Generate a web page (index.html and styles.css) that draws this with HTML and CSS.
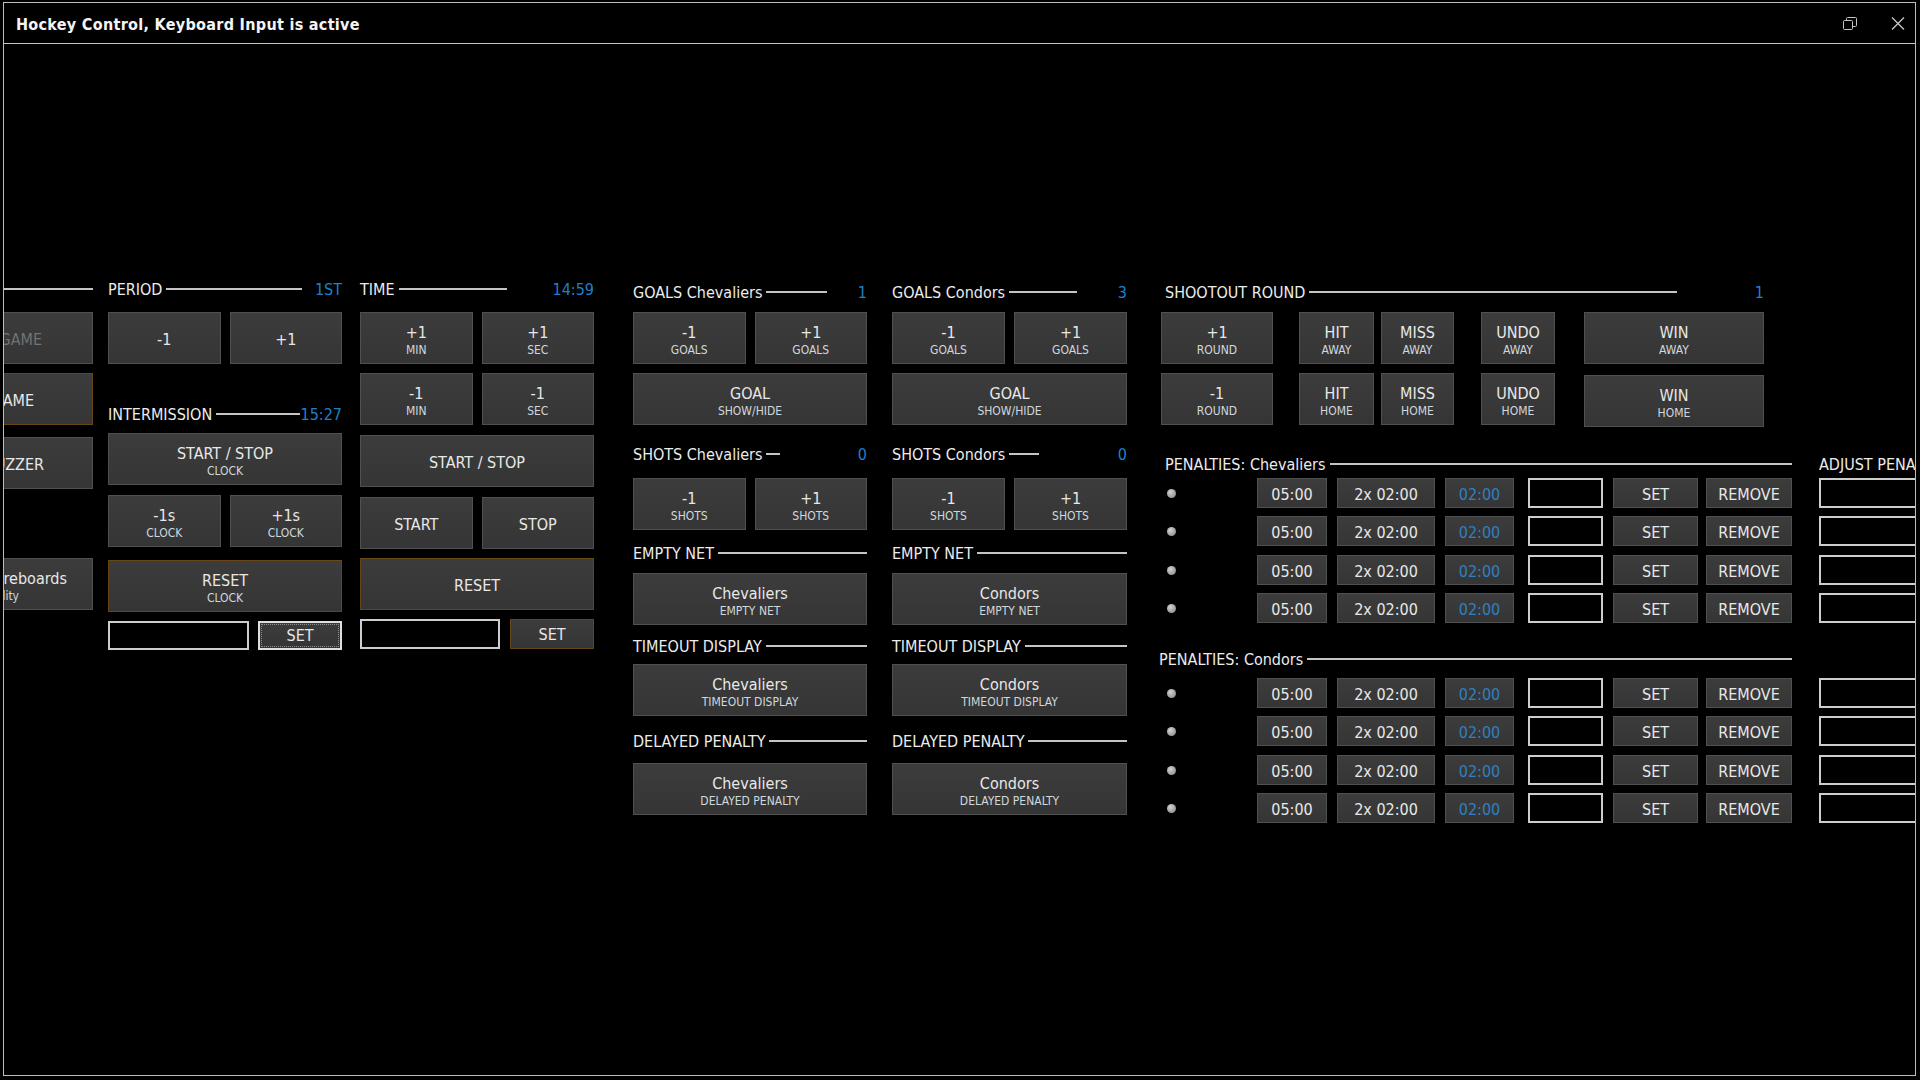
FILE: index.html
```html
<!DOCTYPE html>
<html lang="en">
<head>
<meta charset="utf-8">
<title>Hockey Control</title>
<link rel="stylesheet" href="styles.css">
</head>
<body>
<div class="window">
  <div class="titlebar">
    <span class="title">Hockey Control, Keyboard Input is active</span>
    <div class="wctrls">
      <svg class="wicon" width="14" height="13" viewBox="0 0 14 13"><rect x="0.5" y="3.5" width="9" height="9" rx="1" fill="none" stroke="#c4c4c4"/><path d="M3.5 3.5V1.5a1 1 0 0 1 1-1H12.5a1 1 0 0 1 1 1V8.5a1 1 0 0 1-1 1H9.5" fill="none" stroke="#c4c4c4"/></svg>
      <svg class="wicon" width="14" height="13" viewBox="0 0 14 13"><path d="M1 0.5L13 12.5M13 0.5L1 12.5" fill="none" stroke="#c4c4c4" stroke-width="1.4"/></svg>
    </div>
  </div>
  <div class="content">
    <div class="board">

      <div class="col col-a">
        <div class="hdr"><span class="hdr-line solo"></span></div>
        <div class="btn btn-a a1 dis mt13"><span class="main">START GAME</span></div>
        <div class="btn btn-a a2 warn mt9"><span class="main">END GAME</span></div>
        <div class="btn btn-a a3 mt12"><span class="main">BUZZER</span></div>
        <div class="btn btn-a a4 mt69"><span class="main">Show Scoreboards</span><span class="sub">Visibility</span></div>
      </div>

      <div class="col col-b">
        <div class="hdr"><span class="hdr-lbl">PERIOD</span><span class="hdr-line"></span><span class="hdr-val v40">1ST</span></div>
        <div class="pair mt13">
          <div class="btn"><span class="main">-1</span></div>
          <div class="btn"><span class="main">+1</span></div>
        </div>
        <div class="hdr mt40"><span class="hdr-lbl">INTERMISSION</span><span class="hdr-line"></span><span class="hdr-val v42">15:27</span></div>
        <div class="btn mt9"><span class="main">START / STOP</span><span class="sub">CLOCK</span></div>
        <div class="pair mt10">
          <div class="btn"><span class="main">-1s</span><span class="sub">CLOCK</span></div>
          <div class="btn"><span class="main">+1s</span><span class="sub">CLOCK</span></div>
        </div>
        <div class="btn warn mt13"><span class="main">RESET</span><span class="sub">CLOCK</span></div>
        <div class="setrow h29 mt9">
          <div class="tin w141"></div>
          <div class="btn sbtn focus w84"><span class="main">SET</span></div>
        </div>
      </div>

      <div class="col col-c">
        <div class="hdr"><span class="hdr-lbl">TIME</span><span class="hdr-line"></span><span class="hdr-val v87">14:59</span></div>
        <div class="pair mt13">
          <div class="btn"><span class="main">+1</span><span class="sub">MIN</span></div>
          <div class="btn"><span class="main">+1</span><span class="sub">SEC</span></div>
        </div>
        <div class="pair mt9">
          <div class="btn"><span class="main">-1</span><span class="sub">MIN</span></div>
          <div class="btn"><span class="main">-1</span><span class="sub">SEC</span></div>
        </div>
        <div class="btn mt10"><span class="main">START / STOP</span></div>
        <div class="pair mt10">
          <div class="btn"><span class="main">START</span></div>
          <div class="btn"><span class="main">STOP</span></div>
        </div>
        <div class="btn warn mt9"><span class="main">RESET</span></div>
        <div class="setrow h30 mt9">
          <div class="tin w140"></div>
          <div class="btn sbtn warn w84"><span class="main">SET</span></div>
        </div>
      </div>

      <div class="col col-d">
        <div class="hdr mt3"><span class="hdr-lbl">GOALS Chevaliers</span><span class="hdr-line"></span><span class="hdr-val v40">1</span></div>
        <div class="pair mt10">
          <div class="btn"><span class="main">-1</span><span class="sub">GOALS</span></div>
          <div class="btn"><span class="main">+1</span><span class="sub">GOALS</span></div>
        </div>
        <div class="btn mt9"><span class="main">GOAL</span><span class="sub">SHOW/HIDE</span></div>
        <div class="hdr mt19"><span class="hdr-lbl">SHOTS Chevaliers</span><span class="hdr-line"></span><span class="hdr-val v87">0</span></div>
        <div class="pair mt14">
          <div class="btn"><span class="main">-1</span><span class="sub">SHOTS</span></div>
          <div class="btn"><span class="main">+1</span><span class="sub">SHOTS</span></div>
        </div>
        <div class="hdr mt13"><span class="hdr-lbl">EMPTY NET</span><span class="hdr-line"></span></div>
        <div class="btn mt10"><span class="main">Chevaliers</span><span class="sub">EMPTY NET</span></div>
        <div class="hdr mt11"><span class="hdr-lbl">TIMEOUT DISPLAY</span><span class="hdr-line"></span></div>
        <div class="btn mt8"><span class="main">Chevaliers</span><span class="sub">TIMEOUT DISPLAY</span></div>
        <div class="hdr mt15"><span class="hdr-lbl">DELAYED PENALTY</span><span class="hdr-line"></span></div>
        <div class="btn mt12"><span class="main">Chevaliers</span><span class="sub">DELAYED PENALTY</span></div>
      </div>

      <div class="col col-e">
        <div class="hdr mt3"><span class="hdr-lbl">GOALS Condors</span><span class="hdr-line"></span><span class="hdr-val v50">3</span></div>
        <div class="pair mt10">
          <div class="btn"><span class="main">-1</span><span class="sub">GOALS</span></div>
          <div class="btn"><span class="main">+1</span><span class="sub">GOALS</span></div>
        </div>
        <div class="btn mt9"><span class="main">GOAL</span><span class="sub">SHOW/HIDE</span></div>
        <div class="hdr mt19"><span class="hdr-lbl">SHOTS Condors</span><span class="hdr-line"></span><span class="hdr-val v88">0</span></div>
        <div class="pair mt14">
          <div class="btn"><span class="main">-1</span><span class="sub">SHOTS</span></div>
          <div class="btn"><span class="main">+1</span><span class="sub">SHOTS</span></div>
        </div>
        <div class="hdr mt13"><span class="hdr-lbl">EMPTY NET</span><span class="hdr-line"></span></div>
        <div class="btn mt10"><span class="main">Condors</span><span class="sub">EMPTY NET</span></div>
        <div class="hdr mt11"><span class="hdr-lbl">TIMEOUT DISPLAY</span><span class="hdr-line"></span></div>
        <div class="btn mt8"><span class="main">Condors</span><span class="sub">TIMEOUT DISPLAY</span></div>
        <div class="hdr mt15"><span class="hdr-lbl">DELAYED PENALTY</span><span class="hdr-line"></span></div>
        <div class="btn mt12"><span class="main">Condors</span><span class="sub">DELAYED PENALTY</span></div>
      </div>

      <div class="col col-f">
        <div class="shoot">
          <div class="hdr mt3 ind6"><span class="hdr-lbl">SHOOTOUT ROUND</span><span class="hdr-line"></span><span class="hdr-val v87">1</span></div>
          <div class="srow mt10">
            <div class="btn s-round"><span class="main">+1</span><span class="sub">ROUND</span></div>
            <div class="btn s-hit"><span class="main">HIT</span><span class="sub">AWAY</span></div>
            <div class="btn s-miss"><span class="main">MISS</span><span class="sub">AWAY</span></div>
            <div class="btn s-undo"><span class="main">UNDO</span><span class="sub">AWAY</span></div>
            <div class="btn s-win"><span class="main">WIN</span><span class="sub">AWAY</span></div>
          </div>
          <div class="srow mt9">
            <div class="btn s-round"><span class="main">-1</span><span class="sub">ROUND</span></div>
            <div class="btn s-hit"><span class="main">HIT</span><span class="sub">HOME</span></div>
            <div class="btn s-miss"><span class="main">MISS</span><span class="sub">HOME</span></div>
            <div class="btn s-undo"><span class="main">UNDO</span><span class="sub">HOME</span></div>
            <div class="btn s-win mt2"><span class="main">WIN</span><span class="sub">HOME</span></div>
          </div>
        </div>

        <div class="penhead mt27">
          <div class="hdr pen-hdr ind6"><span class="hdr-lbl">PENALTIES: Chevaliers</span><span class="hdr-line"></span></div>
          <div class="hdr adj-hdr"><span class="hdr-lbl">ADJUST PENALTY</span></div>
        </div>
        <div class="prow mt4">
          <span class="dot"></span><div class="pbtn p05">05:00</div><div class="pbtn p2x">2x 02:00</div><div class="pbtn p02">02:00</div><div class="tin pin"></div><div class="pbtn pset">SET</div><div class="pbtn prem">REMOVE</div><div class="tin padj"></div>
        </div>
        <div class="prow mt8">
          <span class="dot"></span><div class="pbtn p05">05:00</div><div class="pbtn p2x">2x 02:00</div><div class="pbtn p02">02:00</div><div class="tin pin"></div><div class="pbtn pset">SET</div><div class="pbtn prem">REMOVE</div><div class="tin padj"></div>
        </div>
        <div class="prow mt9">
          <span class="dot"></span><div class="pbtn p05">05:00</div><div class="pbtn p2x">2x 02:00</div><div class="pbtn p02">02:00</div><div class="tin pin"></div><div class="pbtn pset">SET</div><div class="pbtn prem">REMOVE</div><div class="tin padj"></div>
        </div>
        <div class="prow mt8">
          <span class="dot"></span><div class="pbtn p05">05:00</div><div class="pbtn p2x">2x 02:00</div><div class="pbtn p02">02:00</div><div class="tin pin"></div><div class="pbtn pset">SET</div><div class="pbtn prem">REMOVE</div><div class="tin padj"></div>
        </div>

        <div class="penhead mt26">
          <div class="hdr pen-hdr"><span class="hdr-lbl">PENALTIES: Condors</span><span class="hdr-line"></span></div>
        </div>
        <div class="prow mt9">
          <span class="dot"></span><div class="pbtn p05">05:00</div><div class="pbtn p2x">2x 02:00</div><div class="pbtn p02">02:00</div><div class="tin pin"></div><div class="pbtn pset">SET</div><div class="pbtn prem">REMOVE</div><div class="tin padj"></div>
        </div>
        <div class="prow mt8">
          <span class="dot"></span><div class="pbtn p05">05:00</div><div class="pbtn p2x">2x 02:00</div><div class="pbtn p02">02:00</div><div class="tin pin"></div><div class="pbtn pset">SET</div><div class="pbtn prem">REMOVE</div><div class="tin padj"></div>
        </div>
        <div class="prow mt9">
          <span class="dot"></span><div class="pbtn p05">05:00</div><div class="pbtn p2x">2x 02:00</div><div class="pbtn p02">02:00</div><div class="tin pin"></div><div class="pbtn pset">SET</div><div class="pbtn prem">REMOVE</div><div class="tin padj"></div>
        </div>
        <div class="prow mt8">
          <span class="dot"></span><div class="pbtn p05">05:00</div><div class="pbtn p2x">2x 02:00</div><div class="pbtn p02">02:00</div><div class="tin pin"></div><div class="pbtn pset">SET</div><div class="pbtn prem">REMOVE</div><div class="tin padj"></div>
        </div>
      </div>

    </div>
  </div>
</div>
</body>
</html>
```

FILE: styles.css
```css
html, body {
  margin: 0;
  padding: 0;
  background: #000;
}
body {
  font-family: "DejaVu Sans Condensed", "DejaVu Sans", sans-serif;
  font-stretch: condensed;
  color: #e8e8e8;
  width: 1920px;
  height: 1080px;
  overflow: hidden;
}
.window {
  margin: 2px 4px 0 3px;
  height: 1074px;
  border: 1px solid #bdbdbd;
  box-sizing: border-box;
  display: flex;
  flex-direction: column;
  overflow: hidden;
}
.titlebar {
  height: 40px;
  flex: none;
  border-bottom: 1px solid #c6c6c6;
  display: flex;
  align-items: center;
  padding-left: 12px;
}
.title {
  font-weight: bold;
  font-size: 16px;
  letter-spacing: 0.3px;
  color: #f4f4f4;
  white-space: nowrap;
  padding-top: 2px;
}
.wctrls {
  margin-left: auto;
  display: flex;
  align-items: center;
  gap: 34px;
  padding-right: 10px;
  padding-top: 1px;
}
.wicon { display: block; }
.content {
  flex: 1;
  overflow: hidden;
}
.board {
  display: flex;
  align-items: flex-start;
  padding-top: 235px;
}
.col {
  flex: none;
  display: flex;
  flex-direction: column;
}
.col-a { width: 200px; margin-left: -111px; }
.col-b { width: 234px; margin-left: 15px; }
.col-c { width: 234px; margin-left: 18px; }
.col-d { width: 234px; margin-left: 39px; }
.col-e { width: 235px; margin-left: 25px; }
.col-f { margin-left: 32px; }

/* section headers */
.hdr {
  display: flex;
  align-items: center;
  height: 20px;
  line-height: 20px;
  font-size: 16px;
  color: #ececec;
  white-space: nowrap;
}
.hdr-lbl, .hdr-val { padding-top: 2px; }
.hdr-line {
  flex: 1;
  height: 2px;
  background: #c4c4c4;
  margin-left: 4px;
}
.hdr-line.solo { margin-left: 0; }
.hdr-val {
  flex: none;
  text-align: right;
  color: #1e80c8;
}
.v40 { width: 40px; }
.v42 { width: 42px; }
.v50 { width: 50px; }
.v87 { width: 87px; }
.v88 { width: 88px; }
.ind6 { padding-left: 6px; }

/* buttons */
.btn {
  height: 52px;
  box-sizing: border-box;
  display: flex;
  flex-direction: column;
  align-items: center;
  justify-content: center;
  padding-top: 4px;
  background: linear-gradient(#3c3c3c, #353535);
  border: 1px solid #505050;
  color: #e8e8e8;
  white-space: nowrap;
  overflow: hidden;
}
.btn .main {
  font-size: 16px;
  line-height: 20px;
}
.btn .sub {
  font-size: 12px;
  line-height: 14px;
  color: #d0d7dd;
}
.btn.warn { border-color: #674614; }
.btn.dis .main { color: #727272; }
.pair {
  display: flex;
  gap: 9px;
}
.pair .btn { flex: 1; }

.btn-a { align-items: flex-end; }
.a1 { padding-right: 50px; }
.a2 { padding-right: 58px; }
.a3 { padding-right: 48px; }
.a4 { padding-right: 25px; }
.a4 .sub { margin-right: 48px; }

.setrow {
  display: flex;
  justify-content: space-between;
}
.h29 { height: 29px; }
.h30 { height: 30px; }
.setrow .btn { height: 100%; padding-top: 1px; }
.tin {
  box-sizing: border-box;
  height: 100%;
  background: #000;
  border: 2px solid #cdcdcd;
}
.w140 { width: 140px; }
.w141 { width: 141px; }
.w84 { width: 84px; }
.btn.focus {
  border: 2px solid #dedede;
  position: relative;
}
.btn.focus::after {
  content: "";
  position: absolute;
  inset: 1px;
  border: 1px dotted #8c8c8c;
}

/* shootout */
.shoot { width: 605px; }
.srow {
  display: flex;
  align-items: flex-start;
}
.s-round { margin-left: 2px; width: 112px; }
.s-hit { margin-left: 26px; width: 75px; }
.s-miss { margin-left: 7px; width: 73px; }
.s-undo { margin-left: 27px; width: 74px; }
.s-win { margin-left: 29px; width: 180px; }

/* penalties */
.penhead { display: flex; }
.pen-hdr { width: 633px; box-sizing: border-box; flex: none; }
.adj-hdr { margin-left: 27px; }
.prow {
  display: flex;
  align-items: center;
  height: 30px;
}
.dot {
  flex: none;
  width: 9px;
  height: 9px;
  border-radius: 50%;
  margin-left: 8px;
  background: radial-gradient(circle at 38% 35%, #d2d2d2 0, #a8a8a8 50%, #858585 100%);
}
.pbtn {
  flex: none;
  height: 30px;
  box-sizing: border-box;
  display: flex;
  align-items: center;
  justify-content: center;
  padding-top: 2px;
  background: linear-gradient(#3c3c3c, #353535);
  border: 1px solid #505050;
  font-size: 16px;
  color: #e8e8e8;
  white-space: nowrap;
}
.p05 { margin-left: 81px; width: 70px; }
.p2x { margin-left: 10px; width: 98px; }
.p02 { margin-left: 10px; width: 69px; color: #2f80c2; }
.pin { flex: none; margin-left: 14px; width: 75px; }
.pset { margin-left: 10px; width: 85px; }
.prem { margin-left: 8px; width: 86px; }
.padj { flex: none; margin-left: 27px; width: 200px; }

/* spacing */
.mt2 { margin-top: 2px; }
.mt3 { margin-top: 3px; }
.mt4 { margin-top: 4px; }
.mt8 { margin-top: 8px; }
.mt9 { margin-top: 9px; }
.mt10 { margin-top: 10px; }
.mt11 { margin-top: 11px; }
.mt12 { margin-top: 12px; }
.mt13 { margin-top: 13px; }
.mt14 { margin-top: 14px; }
.mt15 { margin-top: 15px; }
.mt19 { margin-top: 19px; }
.mt26 { margin-top: 26px; }
.mt27 { margin-top: 27px; }
.mt40 { margin-top: 40px; }
.mt69 { margin-top: 69px; }
```
